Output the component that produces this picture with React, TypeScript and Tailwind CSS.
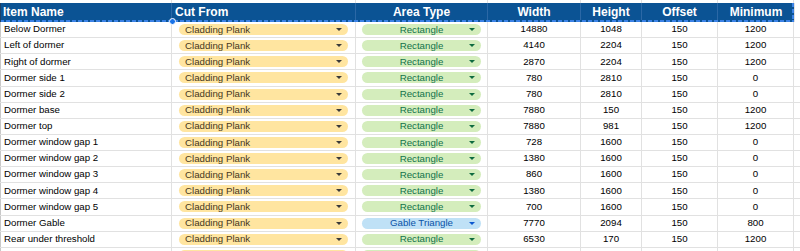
import React from "react";

type Row = {
  name: string;
  cut: string;
  area: string;
  width: string;
  height: string;
  offset: string;
  minimum: string;
};

const rows: Row[] = [
  { name: "Below Dormer", cut: "Cladding Plank", area: "Rectangle", width: "14880", height: "1048", offset: "150", minimum: "1200" },
  { name: "Left of dormer", cut: "Cladding Plank", area: "Rectangle", width: "4140", height: "2204", offset: "150", minimum: "1200" },
  { name: "Right of dormer", cut: "Cladding Plank", area: "Rectangle", width: "2870", height: "2204", offset: "150", minimum: "1200" },
  { name: "Dormer side 1", cut: "Cladding Plank", area: "Rectangle", width: "780", height: "2810", offset: "150", minimum: "0" },
  { name: "Dormer side 2", cut: "Cladding Plank", area: "Rectangle", width: "780", height: "2810", offset: "150", minimum: "0" },
  { name: "Dormer base", cut: "Cladding Plank", area: "Rectangle", width: "7880", height: "150", offset: "150", minimum: "1200" },
  { name: "Dormer top", cut: "Cladding Plank", area: "Rectangle", width: "7880", height: "981", offset: "150", minimum: "1200" },
  { name: "Dormer window gap 1", cut: "Cladding Plank", area: "Rectangle", width: "728", height: "1600", offset: "150", minimum: "0" },
  { name: "Dormer window gap 2", cut: "Cladding Plank", area: "Rectangle", width: "1380", height: "1600", offset: "150", minimum: "0" },
  { name: "Dormer window gap 3", cut: "Cladding Plank", area: "Rectangle", width: "860", height: "1600", offset: "150", minimum: "0" },
  { name: "Dormer window gap 4", cut: "Cladding Plank", area: "Rectangle", width: "1380", height: "1600", offset: "150", minimum: "0" },
  { name: "Dormer window gap 5", cut: "Cladding Plank", area: "Rectangle", width: "700", height: "1600", offset: "150", minimum: "0" },
  { name: "Dormer Gable", cut: "Cladding Plank", area: "Gable Triangle", width: "7770", height: "2094", offset: "150", minimum: "800" },
  { name: "Rear under threshold", cut: "Cladding Plank", area: "Rectangle", width: "6530", height: "170", offset: "150", minimum: "1200" },
  // next row, only the top of its chips is in view
  { name: "", cut: "", area: "", width: "", height: "", offset: "", minimum: "" },
];

function Caret({ color }: { color: string }) {
  return (
    <svg width="6" height="3" viewBox="0 0 6 3" className="shrink-0">
      <path d="M0 0H6L3 3Z" fill={color} />
    </svg>
  );
}

function CutChip({ label }: { label: string }) {
  return (
    <div className="flex h-[11px] w-[169px] items-center justify-between rounded-full bg-[#ffe5a0] pl-[6px] pr-[6px] text-[#473821]">
      <span className="leading-none">{label}</span>
      <Caret color="#3a3a3a" />
    </div>
  );
}

function AreaChip({ label }: { label: string }) {
  const gable = label === "Gable Triangle";
  return (
    <div
      className={`relative flex h-[11px] w-[119px] items-center justify-center rounded-full ${
        gable ? "bg-[#bfe1f6] text-[#0a53a8]" : "bg-[#d4edbc] text-[#11734b]"
      }`}
    >
      <span className="leading-none">{label}</span>
      <span className="absolute right-[6px] top-[4px] flex">
        <Caret color={gable ? "#0b57d0" : "#0e6b3f"} />
      </span>
    </div>
  );
}

const cell = "flex h-full shrink-0 items-center border-r border-[#e1e1e1]";

export default function App() {
  return (
    <div
      className="relative h-[251px] w-[800px] overflow-hidden bg-white text-[9.7px] text-black"
      style={{ fontFamily: '"Liberation Sans", Arial, sans-serif' }}
    >
      {/* strip of row above */}
      <div className="flex h-[3px]">
        <div className={`${cell} w-[172px]`} />
        <div className={`${cell} w-[184px]`} />
        <div className={`${cell} w-[132px]`} />
        <div className={`${cell} w-[93px]`} />
        <div className={`${cell} w-[61px]`} />
        <div className={`${cell} w-[76px]`} />
        <div className={`${cell} w-[76px]`} />
      </div>

      {/* header */}
      <div className="flex h-[19px] text-[12px] font-bold text-white">
        <div className="flex w-[794px] bg-[#0b5394] pb-[2px]">
          <div className="flex w-[172px] items-center border-r border-[#2b68a6] pl-[3px]">Item Name</div>
          <div className="flex w-[184px] items-center border-r border-[#2b68a6] pl-[3px]">Cut From</div>
          <div className="flex w-[132px] items-center justify-center border-r border-[#2b68a6]">Area Type</div>
          <div className="flex w-[93px] items-center justify-center border-r border-[#2b68a6]">Width</div>
          <div className="flex w-[61px] items-center justify-center border-r border-[#2b68a6]">Height</div>
          <div className="flex w-[76px] items-center justify-center border-r border-[#2b68a6]">Offset</div>
          <div className="flex w-[76px] items-center justify-center">Minimum</div>
        </div>
        <div className="flex-1 border-l border-[#e1e1e1]" />
      </div>

      {/* data rows */}
      {rows.map((r, i) => (
        <div key={i} className="flex h-[16.13px] border-b border-[#e1e1e1]">
          <div className={`${cell} w-[172px] border-l border-l-[#c8c8c8] pl-[3px]`}>{r.name}</div>
          <div className={`${cell} w-[184px] pl-[7px]`}>
            <CutChip label={r.cut} />
          </div>
          <div className={`${cell} w-[132px] pl-[6px]`}>
            <AreaChip label={r.area} />
          </div>
          <div className={`${cell} w-[93px] justify-center`}>{r.width}</div>
          <div className={`${cell} w-[61px] justify-center`}>{r.height}</div>
          <div className={`${cell} w-[76px] justify-center`}>{r.offset}</div>
          <div className={`${cell} w-[76px] justify-center`}>{r.minimum}</div>
        </div>
      ))}

      {/* copy marquee over the header row */}
      <div className="absolute left-0 top-[20px] h-[2px] w-[794px] bg-[repeating-linear-gradient(90deg,#3b82e6_0_4px,transparent_4px_6px)]" />
      <div className="absolute left-[792px] top-[3px] h-[19px] w-[2px] bg-[repeating-linear-gradient(180deg,#3b82e6_0_4px,transparent_4px_6px)]" />
      <div className="absolute left-0 top-[3px] h-[19px] w-[1px] bg-[#1d3f66]" />
      <div className="absolute left-[168.5px] top-[17.5px] h-[7px] w-[7px] rounded-full border border-white bg-[#1a73e8]" />
    </div>
  );
}
